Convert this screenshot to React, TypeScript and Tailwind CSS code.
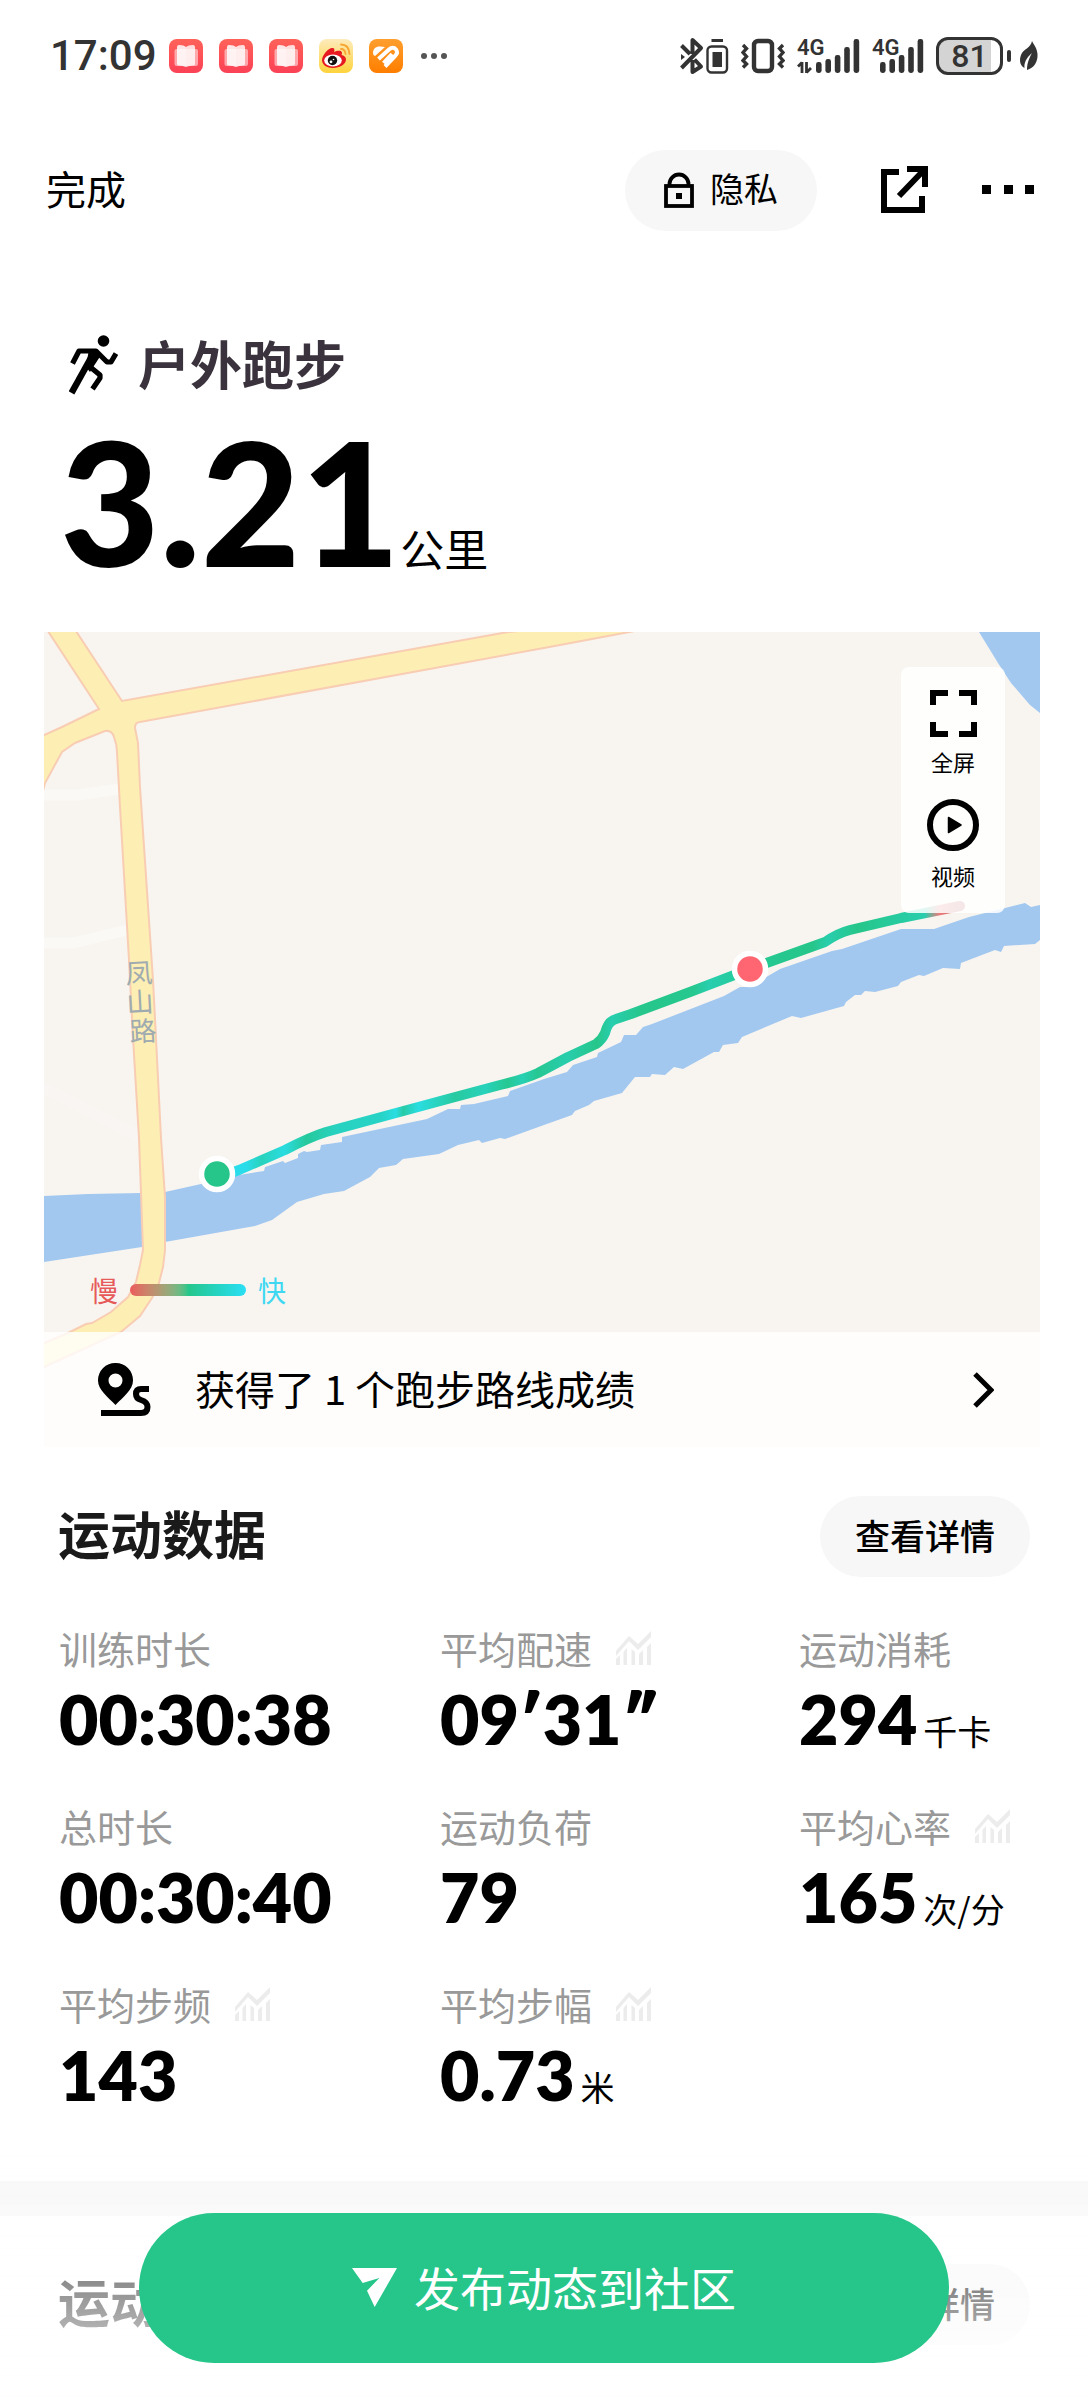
import type { ReactNode } from "react"

interface Stat {
  label: string
  value: string
  unit?: string
  chart?: boolean
}

const stats: Stat[] = [
  { label: "训练时长", value: "00:30:38" },
  { label: "平均配速", value: "09′31″", chart: true },
  { label: "运动消耗", value: "294", unit: "千卡" },
  { label: "总时长", value: "00:30:40" },
  { label: "运动负荷", value: "79" },
  { label: "平均心率", value: "165", unit: "次/分", chart: true },
  { label: "平均步频", value: "143", chart: true },
  { label: "平均步幅", value: "0.73", unit: "米", chart: true },
]

const barTops = [25, 22, 18, 10, 2]

function ReaderIcon() {
  return (
    <svg width="34" height="34" viewBox="0 0 34 34">
      <defs>
        <linearGradient id="reader" x1="0" y1="0" x2="0" y2="1">
          <stop offset="0" stopColor="#ff6259" />
          <stop offset="1" stopColor="#fb4156" />
        </linearGradient>
      </defs>
      <rect width="34" height="34" rx="8" fill="url(#reader)" />
      <rect x="5.5" y="10" width="23.5" height="17" rx="2" fill="#fff" opacity=".5" />
      <path d="M8 8Q8 6 10 6Q15 6 17 8V28Q14 26.5 10 26.5Q8 26.5 8 25Z" fill="#fff" opacity=".85" />
      <path d="M26 8Q26 6 24 6Q19 6 17 8V28Q20 26.5 24 26.5Q26 26.5 26 25Z" fill="#fff" opacity=".8" />
    </svg>
  )
}

function WeiboIcon() {
  return (
    <svg width="34" height="34" viewBox="0 0 34 34">
      <defs>
        <linearGradient id="weibo" x1="0" y1="0" x2="0" y2="1">
          <stop offset="0" stopColor="#fdebbb" />
          <stop offset="1" stopColor="#fed33c" />
        </linearGradient>
      </defs>
      <rect width="34" height="34" rx="8" fill="url(#weibo)" />
      <path d="M3 21C3 16 10 8 14 9C16 9.5 15.5 12 15 13C18 11.5 23 11 23 14C23 15 22.5 16 22.5 16C25 16.5 27 18 27 20.5C27 25 21 29 14 29C8 29 3 26 3 21Z" fill="#e61a20" />
      <ellipse cx="14" cy="21.5" rx="8.8" ry="6" fill="#fff" />
      <circle cx="13.5" cy="21.5" r="4.7" fill="#111" />
      <circle cx="12" cy="22.8" r="1.4" fill="#fff" />
      <circle cx="14.5" cy="20.5" r=".8" fill="#fff" />
      <path d="M22 5.5Q30 5.5 30.5 15M22 10Q26 10 26.5 15" fill="none" stroke="#f8a531" strokeWidth="1.8" strokeLinecap="round" />
    </svg>
  )
}

function OrangeIcon() {
  return (
    <svg width="34" height="34" viewBox="0 0 34 34">
      <defs>
        <linearGradient id="orange" x1="0" y1="0" x2="0" y2="1">
          <stop offset="0" stopColor="#ff9f2e" />
          <stop offset="1" stopColor="#fe7e00" />
        </linearGradient>
      </defs>
      <rect width="34" height="34" rx="8" fill="url(#orange)" />
      <path d="M4 14C4 9 8 7 11 7.5L16 8L6 17Q4 16.5 4 14Z" fill="#fff" />
      <path d="M9.500 20L20 10.5Q24 7 27 10.5Q29.500 13.5 26 17L16 27.5M14.500 24L23 15" fill="none" stroke="#fff" strokeWidth="4" />
    </svg>
  )
}

function BluetoothIcon() {
  return (
    <svg width="49" height="38" viewBox="0 0 49 38" fill="none" stroke="#333" strokeWidth="4" strokeLinejoin="round">
      <path d="M1.5 8.5L10 17M1.5 31L21 11L12.5 3V17M12.5 23V35L21 29.5L14.5 22.5" />
      <path d="M1 17L5 20L1 23Z" fill="#333" stroke="none" />
      <rect x="27.5" y="9.5" width="19.5" height="26" rx="4" strokeWidth="2.4" />
      <path d="M31.5 3.5H43" strokeWidth="3" />
      <rect x="32.5" y="15" width="9.5" height="15" fill="#333" stroke="none" />
    </svg>
  )
}

function VibrateIcon() {
  return (
    <svg width="44" height="38" viewBox="0 0 44 38" fill="none" stroke="#333">
      <rect x="13" y="4" width="18" height="30" rx="4" strokeWidth="4.4" />
      <path d="M2 8L5.5 11.5L2 15.5L5.5 19.5L2 23.5L5.5 27L2 30.5M42 8L38.5 11.5L42 15.5L38.5 19.5L42 23.5L38.5 27L42 30.5" strokeWidth="3.4" />
    </svg>
  )
}

function SignalIcon({ start, arrows }: { start: number; arrows?: boolean }) {
  return (
    <svg width={start + 44} height="54" viewBox={`0 -8 ${start + 44} 54`} fill="#333">
      <text x="0" y="18" fontSize="22" fontWeight="600" fontFamily="Roboto, sans-serif">
        4G
      </text>
      {barTops.map((top, i) => (
        <rect key={top} x={start + i * 9.4} y={top} width="5.6" height={36 - top} rx="2.4" />
      ))}
      {arrows && <path d="M5 25V36M1 29.5L5 25.5M9.5 25V36M9.5 35.5L14 31" stroke="#333" strokeWidth="2.8" fill="none" />}
    </svg>
  )
}

function StatusBar() {
  return (
    <div className="flex h-[112px] items-center justify-between pl-[50px] pr-[49px] text-[#333]">
      <div className="flex items-center gap-4">
        <span className="-mr-1 font-['Roboto',sans-serif] text-[42px] font-medium leading-none">17:09</span>
        <ReaderIcon />
        <ReaderIcon />
        <ReaderIcon />
        <WeiboIcon />
        <OrangeIcon />
        <svg className="ml-0.5" width="26" height="8" viewBox="0 0 26 8" fill="#555">
          <circle cx="3" cy="4" r="3" />
          <circle cx="13" cy="4" r="3" />
          <circle cx="23" cy="4" r="3" />
        </svg>
      </div>
      <div className="flex items-center gap-3">
        <BluetoothIcon />
        <VibrateIcon />
        <SignalIcon start={19} arrows />
        <SignalIcon start={8} />
        <div className="flex items-center gap-1">
          <div className="flex h-[38px] w-[67px] items-center justify-center rounded-xl border-[3px] border-[#333] bg-linear-to-r from-[#d4d4d4] from-85% to-white to-85% font-['Roboto',sans-serif] text-[32px] font-medium leading-none">
            81
          </div>
          <div className="h-3 w-1 rounded-full bg-[#333]" />
          <svg className="ml-1" width="20" height="32" viewBox="0 0 20 32" fill="#333">
            <path d="M13 1C15 5 18 8 18.5 14C19 22 15 28 8 30C8 25 9 20 13 13C7 18 5 23 5.5 28C1 26 0 20 2 15C4 9 12 8 13 1Z" />
          </svg>
        </div>
      </div>
    </div>
  )
}

function PillButton({ children, className = "" }: { children: ReactNode; className?: string }) {
  return (
    <button className={`flex h-[81px] items-center rounded-full bg-[#f7f7f7] px-[35px] leading-none text-black ${className}`}>
      {children}
    </button>
  )
}

function TopBar() {
  return (
    <header className="flex h-[156px] items-center pl-[46px] pr-[53px]">
      <button className="pb-1 text-[40px] leading-none">完成</button>
      <PillButton className="ml-auto gap-4 text-[34px]">
        <svg className="ml-1" width="30" height="36" viewBox="0 0 30 36" fill="none" stroke="#000" strokeWidth="3.8">
          <rect x="2" y="14" width="26" height="20" />
          <path d="M5.5 14V12A9.5 9.5 0 0 1 24.5 12V14" />
          <rect x="12" y="21" width="6" height="6" fill="#000" stroke="none" />
        </svg>
        <span className="mr-1 pb-1">隐私</span>
      </PillButton>
      <button aria-label="分享" className="ml-16">
        <svg width="48" height="48" viewBox="0 0 48 48" fill="none" stroke="#000" strokeWidth="6">
          <path d="M18 6H3V44H41V30M26 3H44V21M43 4L18 30" />
        </svg>
      </button>
      <button aria-label="更多" className="ml-[53px]">
        <svg width="53" height="10" viewBox="0 0 53 10">
          <path d="M0 0H9V9H0ZM22 0H31V9H22ZM43 0H52V9H43Z" />
        </svg>
      </button>
    </header>
  )
}

function RunnerIcon() {
  return (
    <svg width="49" height="60" viewBox="0 0 49 60" fill="none" stroke="#000" strokeWidth="5.2" strokeLinejoin="round">
      <circle cx="34.5" cy="6" r="5.8" fill="#000" stroke="none" />
      <path d="M3.5 28.5L10 16H27L38 27H42L47 18.5" />
      <path d="M2.5 58L23 21" strokeWidth="6.5" />
      <path d="M20 14H28L32 20L21 37L17 32Z" fill="#000" stroke="none" />
      <path d="M20 31L31 40V43L23.5 54" />
    </svg>
  )
}

function MapDrawing() {
  return (
    <svg className="block w-full" viewBox="44 632 996 815" fill="none">
      <defs>
        <linearGradient id="track" gradientUnits="userSpaceOnUse" x1="217" y1="0" x2="962" y2="0">
          <stop offset="0" stopColor="#2bdff2" />
          <stop offset=".04" stopColor="#2adce8" />
          <stop offset=".06" stopColor="#28d2bc" />
          <stop offset=".09" stopColor="#2adce0" />
          <stop offset=".12" stopColor="#26c99c" />
          <stop offset=".16" stopColor="#28d2c0" />
          <stop offset=".22" stopColor="#28d3c6" />
          <stop offset=".24" stopColor="#2adde2" />
          <stop offset=".25" stopColor="#27cba6" />
          <stop offset=".27" stopColor="#2adde0" />
          <stop offset=".32" stopColor="#27caa0" />
          <stop offset=".36" stopColor="#28d2bb" />
          <stop offset=".39" stopColor="#26c892" />
          <stop offset=".41" stopColor="#28d0b4" />
          <stop offset=".43" stopColor="#26c792" />
          <stop offset=".47" stopColor="#28cdac" />
          <stop offset=".51" stopColor="#26c68a" />
          <stop offset=".53" stopColor="#28ceae" />
          <stop offset=".57" stopColor="#26c68c" />
          <stop offset=".64" stopColor="#26c88f" />
          <stop offset=".66" stopColor="#28ceae" />
          <stop offset=".72" stopColor="#26c994" />
          <stop offset=".8" stopColor="#26c68a" />
          <stop offset=".82" stopColor="#28cead" />
          <stop offset=".86" stopColor="#26c68a" />
          <stop offset=".95" stopColor="#28cead" />
          <stop offset=".97" stopColor="#ee7a7a" />
          <stop offset="1" stopColor="#b96060" />
        </linearGradient>
      </defs>
      <rect x="44" y="632" width="996" height="815" fill="#f8f5f0" />
      <path d="M44 795H78L120 789M44 943H73L127 930" stroke="#faf9f6" strokeWidth="11" />
      <path d="M44 1088L139 1137" stroke="#f9f5f3" strokeWidth="11" />
      {/* water */}
      <path d="M979 632L998 663L1011 683L1030 705L1040 713V632Z" fill="#a2c8f0" />
      <path
        d="M44 1196L88 1194L141 1193L165 1192L201 1184L239 1175L264 1171L265 1167L283 1161L285 1163L298 1158V1154L304 1151L307 1152L320 1150L321 1145L342 1142V1137L427 1119L448 1109H460L461 1105L474 1104L508 1096L510 1091L544 1079L567 1072L573 1065L597 1057L598 1053L621 1042L624 1035H636L643 1027L652 1024L724 996L740 987H749L780 969L832 951L842 949L901 929H934L969 917L1005 908L1025 903L1031 907L1040 905V940L1035 944L1004 946L1001 952L995 950L974 958L961 963L960 969L943 968L924 976L919 975L901 982L898 986L875 992L865 991L861 995H855L846 1002L844 1006L801 1018L792 1016L742 1037L738 1043L723 1045L719 1052H714L683 1069L674 1067L665 1075L652 1074L650 1077H635L622 1093L594 1101L589 1105L575 1111L572 1115L544 1125L505 1139L500 1138L482 1143L479 1140L458 1145L439 1154L403 1159L396 1165L379 1168L370 1177L344 1191L324 1194L297 1202L272 1220L255 1226L165 1242L142 1247L44 1262Z"
        fill="#a2c8f0"
      />
      {/* roads */}
      <path
        d="M40 619L99 709L62 727L42 736V795L45 783L62 752L75 743L105 731Q112 730 114 737Q117 745 117 752L120 807L129 960L133 1038L139 1138L141 1193L143 1250L140 1265L136 1282L128 1297L111 1312L92 1323L86 1324L70 1332L42 1344V1368L121 1332L140 1316L152 1298L158 1287L163 1267L165 1250V1197L161 1138L156 1038L153 980L140 787L138 743L135 728Q135 722 140 722L544 648L640 630V620L508 632L122 701L68 619Z"
        fill="#fdeeb3"
        stroke="#f8cdb3"
        strokeWidth="2"
      />
      <g fill="#9fabb0" fontSize="27" fontFamily="Noto Sans CJK SC, sans-serif" textAnchor="middle">
        <text x="139" y="983" transform="rotate(-3 139 974)">凤</text>
        <text x="140" y="1012" transform="rotate(-3 140 1002)">山</text>
        <text x="143" y="1041" transform="rotate(-3 143 1031)">路</text>
      </g>
      {/* route */}
      <path
        d="M217 1178L239 1170L285 1150Q310 1137 326 1132L396 1113L444 1100L500 1085Q525 1079 538 1073L568 1057L596 1044Q602 1040 605 1033Q608 1021 616 1019L631 1014L690 992L750 969L825 942Q838 933 850 930L901 918L960 906"
        stroke="url(#track)"
        strokeWidth="10"
        strokeLinecap="round"
        strokeLinejoin="round"
      />
      <circle cx="217" cy="1174" r="15.5" fill="#26c68a" stroke="#fff" strokeWidth="5.5" />
      <circle cx="750" cy="969" r="15.5" fill="#ff6672" stroke="#fff" strokeWidth="5.5" />
    </svg>
  )
}

function MapCard() {
  return (
    <section className="relative ml-11 mr-12">
      <MapDrawing />
      <div className="absolute right-[35px] top-[35px] flex w-[104px] flex-col items-center rounded-lg bg-white/85 pb-6 pt-[23px] text-[22px] leading-7">
        <button className="flex flex-col items-center gap-2.5">
          <svg width="47" height="47" viewBox="0 0 47 47" fill="none" stroke="#000" strokeWidth="6">
            <path d="M3 15V3H18M29 3H44V15M44 32V44H29M18 44H3V32" />
          </svg>
          全屏
        </button>
        <button className="mt-6 flex flex-col items-center gap-2.5">
          <svg width="52" height="52" viewBox="0 0 52 52">
            <circle cx="26" cy="26" r="23" fill="none" stroke="#000" strokeWidth="6" />
            <path d="M21.5 18.5L34 26L21.5 33.5Z" stroke="#000" strokeWidth="1.5" strokeLinejoin="round" />
          </svg>
          视频
        </button>
      </div>
      <div className="absolute inset-x-0 bottom-0">
        <div className="flex items-center gap-3 pb-6 pl-[46px] text-[28px] leading-9">
          <span className="text-[#e65a5a]">慢</span>
          <span className="h-3 w-[116px] rounded-full bg-linear-to-r from-[#ea5a5c] via-[#26c68a] to-[#2bdff5]" />
          <span className="text-[#3fd8f2]">快</span>
        </div>
        <a href="#routes" className="flex h-[115px] items-center bg-white/80 pl-[54px] pr-[46px] text-[40px] leading-none">
          <svg width="53" height="54" viewBox="0 0 53 54" fill="none" stroke="#000" strokeWidth="6">
            <path
              fillRule="evenodd"
              stroke="none"
              fill="#000"
              d="M17.5 0A17.3 17.3 0 0 1 35 17.5C35 27 25 34 17.5 42C10 34 0 27 0 17.5A17.3 17.3 0 0 1 17.5 0ZM17.5 10.5A7 7 0 1 0 17.5 24.5A7 7 0 1 0 17.5 10.5Z"
            />
            <path d="M51 26H43Q38 26 38 31Q38 35.5 43 37Q49.5 39 49.5 44Q49.5 50 43 50H3" />
          </svg>
          <span className="ml-11 pb-1">获得了 1 个跑步路线成绩</span>
          <svg className="ml-auto" width="21" height="36" viewBox="0 0 21 36" fill="none" stroke="#000" strokeWidth="5">
            <path d="M2 2L18 18L2 34" />
          </svg>
        </a>
      </div>
    </section>
  )
}

function ChartIcon() {
  return (
    <svg width="35" height="36" viewBox="0 0 35 36" fill="#ececec">
      <path d="M0 21L13 6L22 14L35 1V7L22 20L13 11L0 26Z" />
      <path d="M0 29L4 25V35H0ZM7.5 22L11 18V35H7.5ZM15.5 19L19 22V35H15.5ZM23 24L27 20V35H23ZM31 17L35 13V35H31Z" />
    </svg>
  )
}

function StatItem({ stat }: { stat: Stat }) {
  return (
    <div>
      <dt className="flex h-[54px] items-center gap-6 text-[38px] leading-none text-[#999]">
        {stat.label}
        {stat.chart && <ChartIcon />}
      </dt>
      <dd className="mt-2.5 flex h-[70px] items-baseline gap-1.5 whitespace-nowrap leading-none">
        <span className="font-['Lato',sans-serif] text-[68px] font-extrabold">{stat.value}</span>
        {stat.unit && <span className="text-[34px]">{stat.unit}</span>}
      </dd>
    </div>
  )
}

function SectionHeader({ title }: { title: string }) {
  return (
    <div className="flex items-center justify-between px-[58px]">
      <h2 className="pb-2 text-[52px] font-bold leading-none text-[#1a1a1a]">{title}</h2>
      <PillButton className="pb-1 text-[35px] font-medium">查看详情</PillButton>
    </div>
  )
}

export default function App() {
  return (
    <div className="min-h-screen bg-white font-['Noto_Sans_CJK_SC',sans-serif] text-black">
      <StatusBar />
      <TopBar />
      <main>
        <div className="h-[364px] px-[60px] pt-[65px]">
          <div className="flex items-center gap-5 pl-[9px]">
            <RunnerIcon />
            <h1 className="pb-1 text-[52px] font-bold leading-[60px] text-[#3a333e]">户外跑步</h1>
          </div>
          <div className="mt-2 flex items-baseline">
            <span className="font-['Lato',sans-serif] text-[172px] font-black leading-[192px]">3.21</span>
            <span className="text-[44px] leading-none">公里</span>
          </div>
        </div>
        <MapCard />
        <section className="pb-[70px] pt-[49px]">
          <SectionHeader title="运动数据" />
          <dl className="mt-11 grid grid-cols-[381fr_359fr_289fr] gap-y-11 pl-[59px]">
            {stats.map((stat) => (
              <StatItem key={stat.label} stat={stat} />
            ))}
          </dl>
        </section>
        <section className="border-t-[35px] border-[#f8f8f8] pt-12">
          <SectionHeader title="运动图表" />
        </section>
      </main>
      <div className="fixed inset-x-0 bottom-0 flex h-[270px] items-end justify-center bg-linear-to-b from-white/0 to-white/90 px-[139px] pb-[37px]">
        <button className="flex h-[150px] w-full items-center justify-center gap-4 rounded-full bg-[#26c68a] text-[46px] leading-none text-white">
          <svg width="46" height="40" viewBox="0 0 46 40" fill="#fff">
            <path d="M0 0H45L22.7 39L15 22.7L27.3 10L10.7 15Z" />
          </svg>
          <span className="pb-1">发布动态到社区</span>
        </button>
      </div>
    </div>
  )
}
